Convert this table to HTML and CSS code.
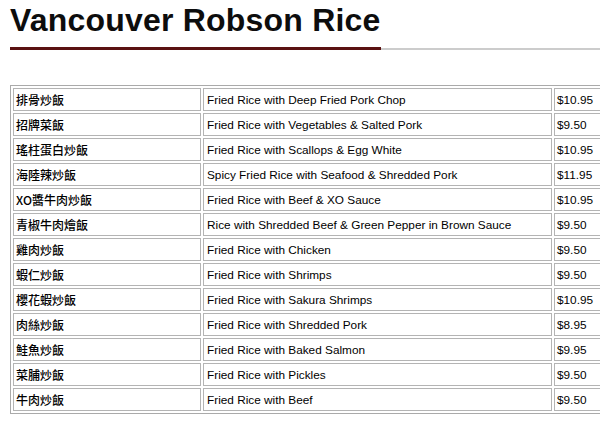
FILE: index.html
```html
<!DOCTYPE html>
<html lang="zh-Hant">
<head>
<meta charset="utf-8">
<title>Vancouver Robson Rice</title>
<link rel="stylesheet" href="styles.css">
</head>
<body>
<div class="page">
  <header class="title-bar">
    <h1 class="title">Vancouver Robson Rice</h1>
    <div class="title-rule"></div>
  </header>
  <div class="menu-wrap">
    <table class="menu">
      <colgroup>
        <col class="c-zh">
        <col class="c-en">
        <col class="c-price">
      </colgroup>
      <tbody>
        <tr><td class="zh">排骨炒飯</td><td>Fried Rice with Deep Fried Pork Chop</td><td class="price">$10.95</td></tr>
        <tr><td class="zh">招牌菜飯</td><td>Fried Rice with Vegetables &amp; Salted Pork</td><td class="price">$9.50</td></tr>
        <tr><td class="zh">瑤柱蛋白炒飯</td><td>Fried Rice with Scallops &amp; Egg White</td><td class="price">$10.95</td></tr>
        <tr><td class="zh">海陸辣炒飯</td><td>Spicy Fried Rice with Seafood &amp; Shredded Pork</td><td class="price">$11.95</td></tr>
        <tr><td class="zh">XO醬牛肉炒飯</td><td>Fried Rice with Beef &amp; XO Sauce</td><td class="price">$10.95</td></tr>
        <tr><td class="zh">青椒牛肉燴飯</td><td>Rice with Shredded Beef &amp; Green Pepper in Brown Sauce</td><td class="price">$9.50</td></tr>
        <tr><td class="zh">雞肉炒飯</td><td>Fried Rice with Chicken</td><td class="price">$9.50</td></tr>
        <tr><td class="zh">蝦仁炒飯</td><td>Fried Rice with Shrimps</td><td class="price">$9.50</td></tr>
        <tr><td class="zh">櫻花蝦炒飯</td><td>Fried Rice with Sakura Shrimps</td><td class="price">$10.95</td></tr>
        <tr><td class="zh">肉絲炒飯</td><td>Fried Rice with Shredded Pork</td><td class="price">$8.95</td></tr>
        <tr><td class="zh">鮭魚炒飯</td><td>Fried Rice with Baked Salmon</td><td class="price">$9.95</td></tr>
        <tr><td class="zh">菜脯炒飯</td><td>Fried Rice with Pickles</td><td class="price">$9.50</td></tr>
        <tr><td class="zh">牛肉炒飯</td><td>Fried Rice with Beef</td><td class="price">$9.50</td></tr>
      </tbody>
    </table>
  </div>
</div>
</body>
</html>
```

FILE: styles.css
```css
html {
  background: #ffffff;
}

body {
  margin: 0;
  font-family: "Liberation Sans", Arial, "Noto Sans CJK TC", sans-serif;
  color: #111111;
}

.page {
  padding: 2px 0 0 10px;
}

.title-bar {
  display: flex;
  align-items: flex-end;
}

.title {
  margin: 0;
  font-size: 32px;
  letter-spacing: 0.2px;
  line-height: 37px;
  font-weight: bold;
  color: #0d0d0d;
  padding-bottom: 8px;
  border-bottom: 3px solid #5a1212;
  white-space: nowrap;
}

.title-rule {
  flex: 1;
  border-bottom: 2px solid #cccccc;
}

.menu-wrap {
  margin-top: 35px;
  overflow: hidden;
}

.menu {
  table-layout: fixed;
  width: 640px;
  border: 1px solid #aaaaaa;
  border-spacing: 2px;
  font-size: 11.8px;
}

.c-zh { width: 188px; }
.c-en { width: 349px; }
.c-price { width: 95px; }

.menu td {
  height: 23px;
  box-sizing: border-box;
  padding: 0 2px 0 3px;
  border: 1px solid #b4b4b4;
  line-height: 14px;
  vertical-align: middle;
  white-space: nowrap;
  color: #000000;
}

.menu td.price {
  padding-left: 2px;
}

.menu td.zh {
  font-family: "Noto Sans CJK TC", sans-serif;
  font-size: 12px;
  font-weight: 500;
  padding-left: 2px;
}
```
